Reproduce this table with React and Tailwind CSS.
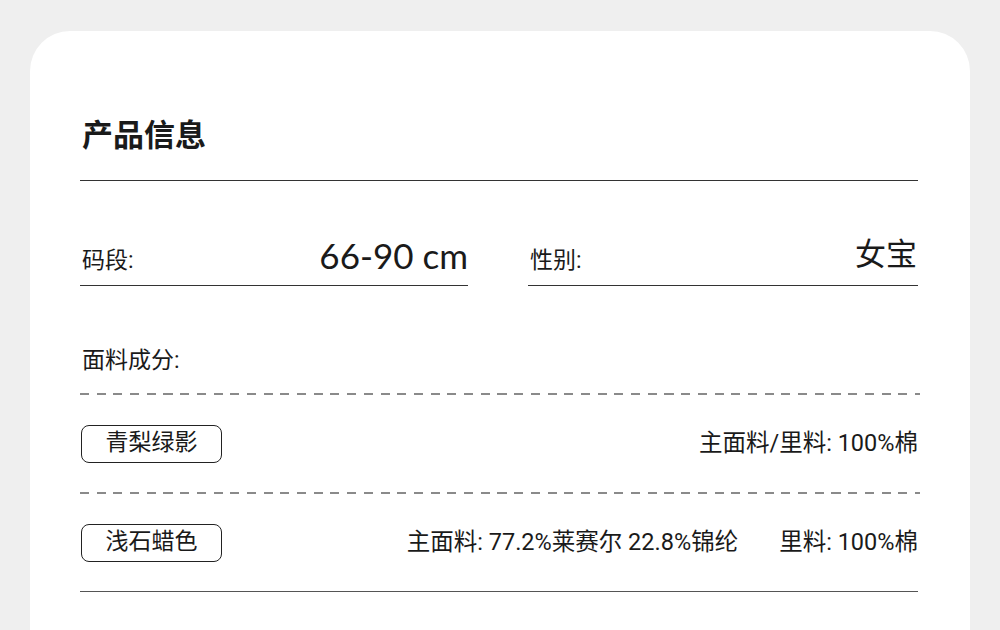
import React from "react";

const cjk = { fontFamily: 'Roboto, "Noto Sans CJK SC", sans-serif' };

const colours = [
  { name: "青梨绿影", parts: ["主面料/里料: 100%棉"] },
  { name: "浅石蜡色", parts: ["主面料: 77.2%莱赛尔 22.8%锦纶", "里料: 100%棉"] },
];

const Dashed = () => (
  <div className="h-[2px] mr-[-2px] bg-[repeating-linear-gradient(90deg,#8a8a8a_0_9px,transparent_9px_16.7px)]" />
);

const App = () => {
  return (
    <div className="w-[1000px] h-[630px] overflow-hidden bg-[#efefef] pt-[31px] px-[30px]" style={cjk}>
      <div className="bg-white rounded-t-[40px] h-[640px] pl-[50px] pr-[52px] pt-[80px] text-[#1a1a1a]">
        {/* title */}
        <div className="border-b border-[#333] pb-[25px]">
          <h1
            className="text-[31px] font-bold leading-[44px] pl-[2px]"
            style={{ fontFamily: '"Noto Sans CJK SC", sans-serif' }}
          >
            产品信息
          </h1>
        </div>

        {/* size + gender */}
        <div className="flex gap-[60px] mt-[54px]">
          <div className="w-[388px] flex items-end justify-between border-b border-[#333] pb-[10px] pl-[2px]">
            <span className="text-[23px] leading-[28px]">码段:</span>
            <span
              className="text-[35px] leading-[40px]"
              style={{ fontFamily: '"Lato", "DejaVu Sans", sans-serif' }}
            >
              66-90 cm
            </span>
          </div>
          <div className="w-[390px] flex items-end justify-between border-b border-[#333] pb-[10px] pl-[2px]">
            <span className="text-[23px] leading-[28px]">性别:</span>
            <span className="text-[31px] leading-[40px] mr-[1px]">女宝</span>
          </div>
        </div>

        {/* fabric */}
        <div className="mt-[61px] text-[23px] leading-[28px] pl-[2px]">面料成分:</div>
        <div className="mt-[18px]">
          <Dashed />
        </div>

        {colours.map((c, i) => (
          <div key={c.name}>
            <div className="flex items-center justify-between h-[97px]">
              <div className="w-[141px] h-[38px] border border-[#222] rounded-[8px] flex items-center justify-center text-[23px] ml-[1px]">
                {c.name}
              </div>
              <div className="flex gap-[41px] text-[23.5px]">
                {c.parts.map((p) => (
                  <span key={p}>{p}</span>
                ))}
              </div>
            </div>
            {i === 0 ? <Dashed /> : <div className="border-t border-[#555]" />}
          </div>
        ))}
      </div>
    </div>
  );
};

export default App;
